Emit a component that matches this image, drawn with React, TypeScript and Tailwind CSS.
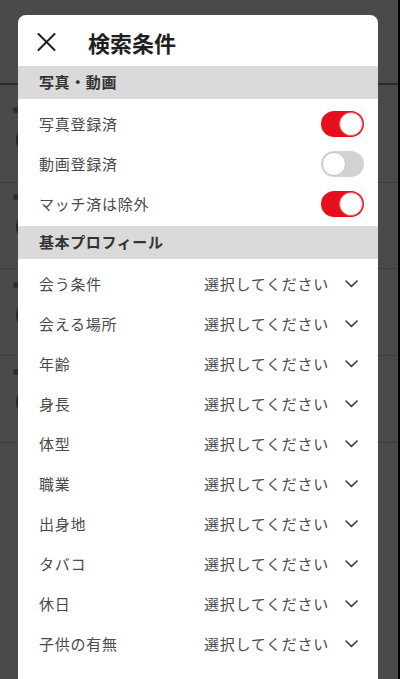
import React from "react";

const photoRows = [
    { label: "写真登録済", on: true },
    { label: "動画登録済", on: false },
    { label: "マッチ済は除外", on: true },
];

const profileRows = [
    "会う条件",
    "会える場所",
    "年齢",
    "身長",
    "体型",
    "職業",
    "出身地",
    "タバコ",
    "休日",
    "子供の有無",
];

// rows of the list that sits behind the dark overlay
const bgRows = [
    { h: "h-[98px] pt-[22px]" },
    { h: "h-[86px] pt-[11px]" },
    { h: "h-[87px] pt-[13px]" },
    { h: "h-[87px] pt-[13px]" },
];

const CloseIcon = () => (
    <svg width="19" height="18" viewBox="0 0 19 18" fill="none" stroke="#1f1f1f" strokeWidth="2" strokeLinecap="round">
        <line x1="1.5" y1="1" x2="17.5" y2="17" />
        <line x1="17.5" y1="1" x2="1.5" y2="17" />
    </svg>
);

const Chevron = () => (
    <svg width="13" height="8" viewBox="0 0 13 8" fill="none" stroke="#3c3c3c" strokeWidth="1.6" strokeLinecap="round" strokeLinejoin="round">
        <polyline points="1,1 6.5,6.5 12,1" />
    </svg>
);

const Toggle = ({ on }: { on: boolean }) => (
    <div
        className={
            on
                ? "w-[43px] h-[26px] rounded-full bg-[#e5101b] flex items-center justify-end p-[1px]"
                : "w-[43px] h-[26px] rounded-full bg-[#d2d2d2] flex items-center justify-start p-[1px]"
        }
    >
        <div
            className={
                on
                    ? "w-[24px] h-[24px] rounded-full bg-white border border-[#ef5a60]"
                    : "w-[24px] h-[24px] rounded-full bg-white border border-[#c4c4c4]"
            }
        />
    </div>
);

const SectionHeader = ({ label }: { label: string }) => (
    <div className="h-[33px] bg-[#dadada] flex items-center pl-[21px] text-[15px] font-bold text-[#333] tracking-[0.04em]">
        {label}
    </div>
);

export default function App() {
    return (
        <div
            className="relative w-full h-[679px] bg-[#4a4a4a] overflow-hidden border-r-2 border-black"
            style={{ fontFamily: '"Noto Sans CJK JP", "Noto Sans", sans-serif' }}
        >
            {/* list behind the overlay */}
            <div>
                <div className="h-[85px] border-b-2 border-[#2b2b2b]" />
                {bgRows.map((r, i) => (
                    <div key={i} className={`${r.h} flex flex-col border-b border-[#3d3d3d] pl-[13px]`}>
                        <div className="w-[6px] h-[6px] rounded-full bg-[#2e2e2e]" />
                        <div className="mt-[12px] ml-[3px] w-[40px] h-[30px] rounded-full bg-[#262626]" />
                    </div>
                ))}
            </div>

            {/* modal */}
            <div className="absolute top-[15px] left-[18px] w-[360px] bottom-0 bg-white rounded-t-[8px]">
                <div className="h-[51px] flex items-center pl-[19px] pt-[2px]">
                    <CloseIcon />
                    <div className="ml-[32px] text-[22px] font-bold text-[#1f1f1f] leading-none">検索条件</div>
                </div>

                <SectionHeader label="写真・動画" />
                <div className="pt-[5px] pb-[2px]">
                    {photoRows.map((r) => (
                        <div key={r.label} className="h-[40px] flex items-center justify-between pl-[21px] pr-[14px]">
                            <span className="text-[15px] text-[#4a4a4a] tracking-[0.05em]">{r.label}</span>
                            <Toggle on={r.on} />
                        </div>
                    ))}
                </div>

                <SectionHeader label="基本プロフィール" />
                <div className="pt-[5px]">
                    {profileRows.map((label) => (
                        <div key={label} className="h-[40px] flex items-center justify-between pl-[21px] pr-[20px]">
                            <span className="text-[15px] text-[#4a4a4a] tracking-[0.05em]">{label}</span>
                            <div className="flex items-center gap-[16px]">
                                <span className="text-[15px] text-[#4a4a4a] tracking-[0.05em]">選択してください</span>
                                <Chevron />
                            </div>
                        </div>
                    ))}
                </div>
            </div>
        </div>
    );
}
